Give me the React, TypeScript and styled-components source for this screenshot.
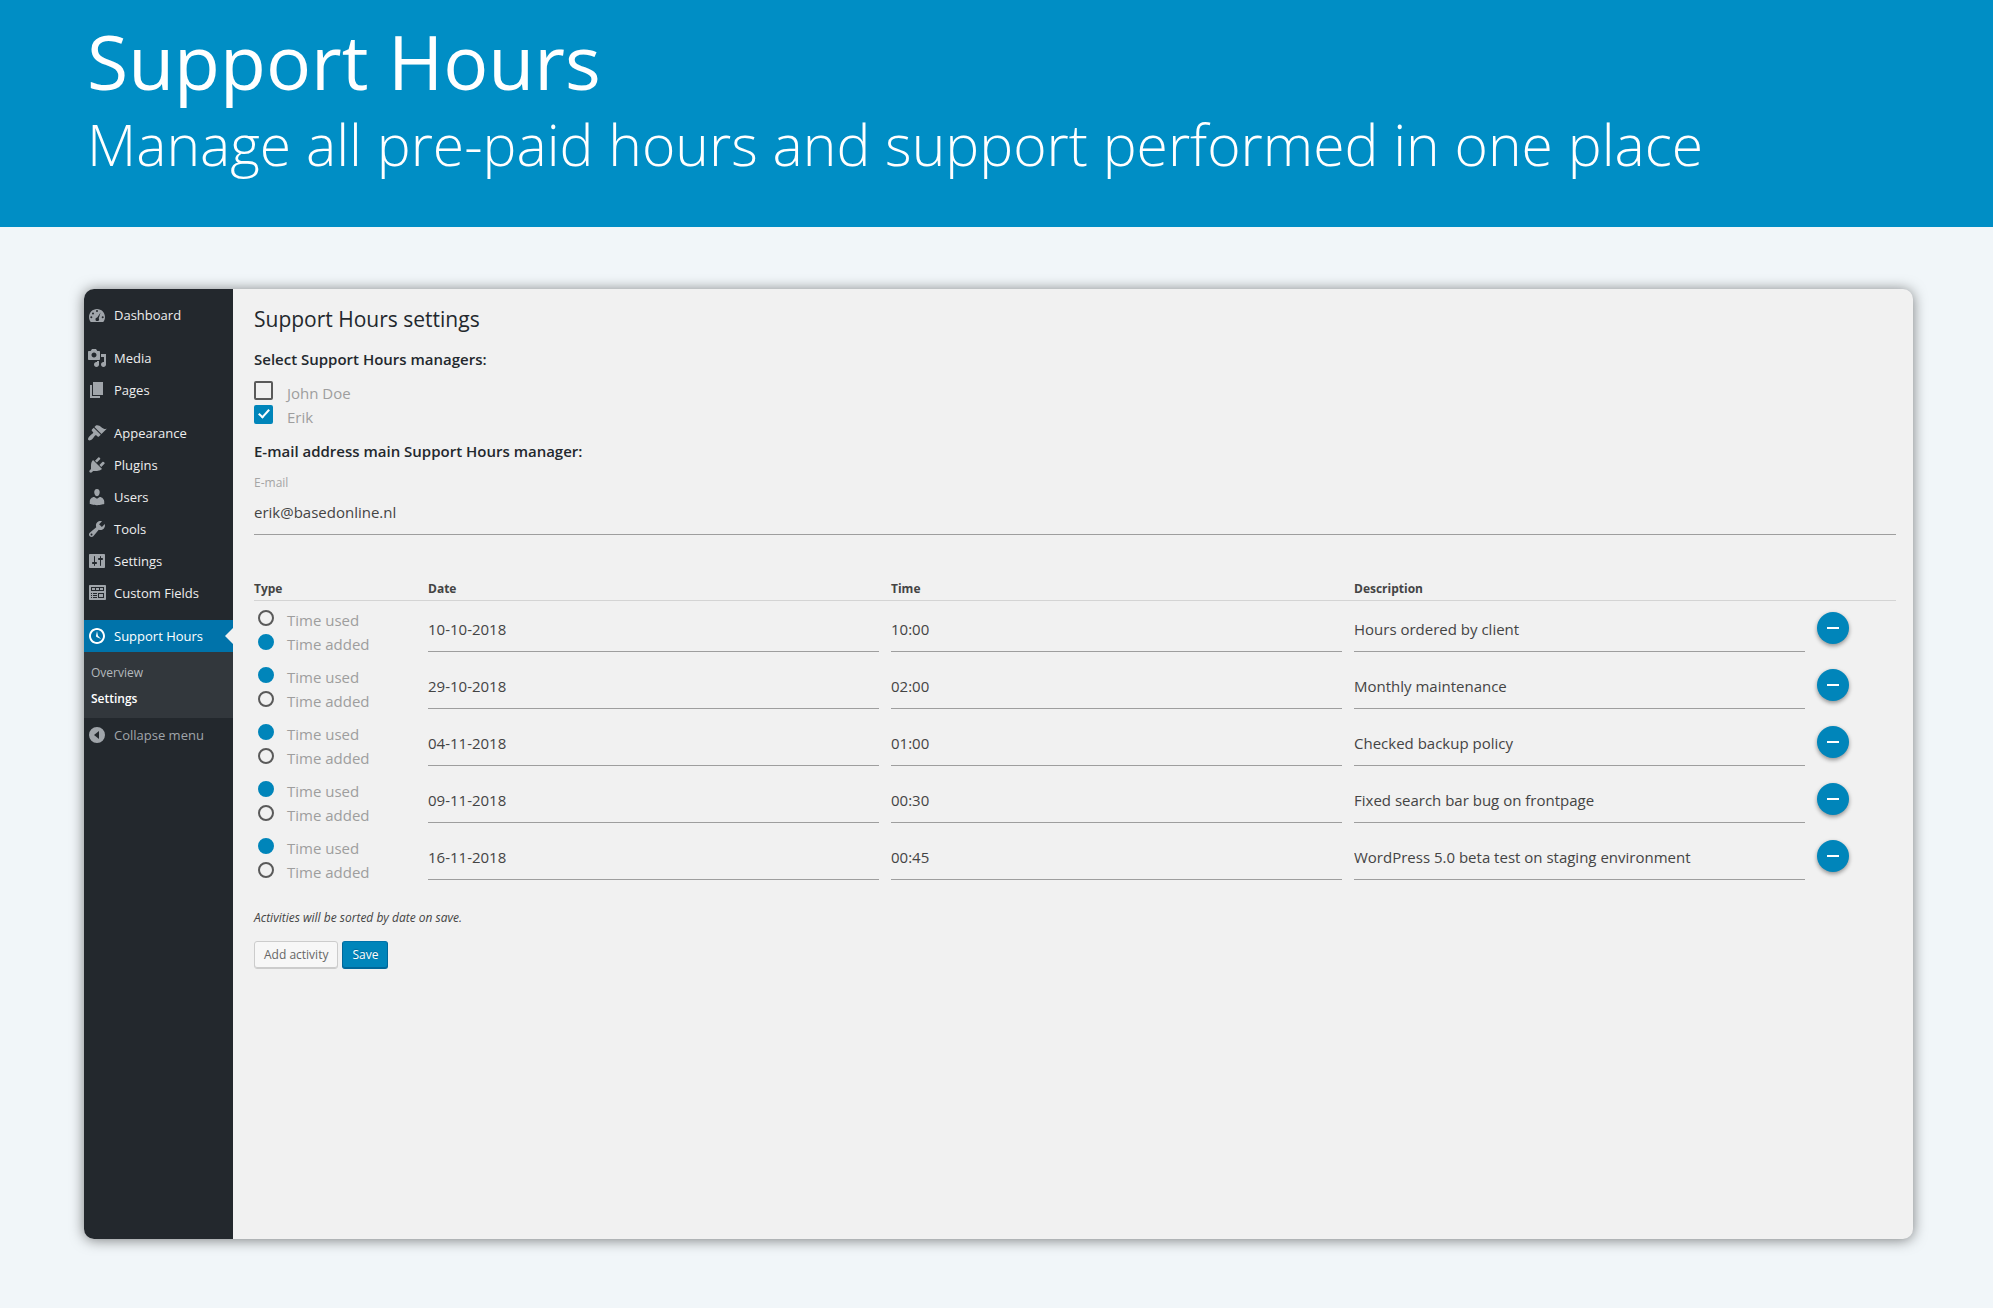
import React, { useState } from "react";
import styled, { createGlobalStyle } from "styled-components";

const GlobalStyle = createGlobalStyle`
  *, *::before, *::after { box-sizing: border-box; }
  body {
    margin: 0;
    background: #f1f6f9;
    font-family: "Open Sans", "Noto Sans", sans-serif;
    color: #444;
  }
`;

const Page = styled.div`
  min-height: 100vh;
  display: flex;
  flex-direction: column;
`;

const Banner = styled.header`
  background: #008ec5;
  color: #fff;
  padding: 13px 87px 48px;
`;

const BannerTitle = styled.h1`
  margin: 0;
  font-size: 75px;
  line-height: 97px;
  font-weight: 400;
`;

const BannerText = styled.p`
  margin: 0;
  font-size: 57px;
  line-height: 69px;
  font-weight: 300;
`;

const Stage = styled.div`
  flex: 1;
  display: flex;
  padding: 62px 80px 69px 84px;
`;

const Panel = styled.div`
  flex: 1;
  display: flex;
  border-radius: 10px;
  overflow: hidden;
  background: #f1f1f1;
  box-shadow: 0 1px 14px rgba(0, 0, 0, 0.5);
`;

const Sidebar = styled.nav`
  flex: 0 0 149px;
  background: #23282d;
  padding-top: 10px;
`;

const MenuGroup = styled.ul`
  list-style: none;
  margin: 0 0 11px;
  padding: 0;
`;

const MenuLink = styled.a<{ $active?: boolean }>`
  position: relative;
  display: flex;
  align-items: center;
  gap: 7px;
  height: 32px;
  padding-left: 3px;
  font-size: 13px;
  line-height: 32px;
  text-decoration: none;
  white-space: nowrap;
  color: ${(p) => (p.$active ? "#fff" : "#eee")};
  background: ${(p) => (p.$active ? "#0073aa" : "transparent")};

  svg { color: ${(p) => (p.$active ? "#fff" : "#a0a5aa")}; }

  &::after {
    content: "";
    display: ${(p) => (p.$active ? "block" : "none")};
    position: absolute;
    right: 0;
    top: 8px;
    border: 8px solid transparent;
    border-left-width: 0;
    border-right-color: #f1f1f1;
  }
`;

const SubMenu = styled.ul`
  list-style: none;
  margin: 0;
  padding: 8px 0 6px;
  background: #32373c;
`;

const SubLink = styled.a<{ $current?: boolean }>`
  display: block;
  padding-left: 7px;
  font-size: 12px;
  line-height: 26px;
  text-decoration: none;
  font-weight: ${(p) => (p.$current ? 600 : 400)};
  color: ${(p) => (p.$current ? "#fff" : "#b4b9be")};
`;

const CollapseButton = styled.button`
  display: flex;
  align-items: center;
  gap: 7px;
  width: 100%;
  height: 34px;
  padding: 0 0 0 3px;
  border: 0;
  background: none;
  font: 13px/32px "Open Sans", "Noto Sans", sans-serif;
  color: #a0a5aa;
  white-space: nowrap;
`;

const Icon = styled.svg`
  flex: none;
  width: 20px;
  height: 20px;
  fill: currentColor;
`;

const Content = styled.main`
  flex: 1;
  min-width: 0;
  padding: 14px 17px 24px 21px;
`;

const Heading = styled.h2`
  margin: 0;
  font-size: 21px;
  line-height: 32px;
  font-weight: 400;
  color: #23282d;
`;

const SubHeading = styled.h3`
  margin: 12px 0 8px;
  font-size: 15px;
  line-height: 24px;
  font-weight: 600;
  color: #23282d;
`;

const Choice = styled.label<{ $round?: boolean }>`
  display: flex;
  align-items: center;
  gap: 14px;
  height: 24px;
  padding-left: ${(p) => (p.$round ? "4px" : "0")};
  color: #9e9e9e;
  font-size: 15px;
  line-height: 20px;
`;

const ChoiceText = styled.span`
  padding-top: 3px;
  white-space: nowrap;
`;

const Checkbox = styled.input`
  appearance: none;
  display: grid;
  place-items: center;
  width: 19px;
  height: 19px;
  margin: 0 0 2px;
  border: 2px solid #5a5a5a;
  border-radius: 2px;

  &:checked {
    border-color: #0085ba;
    background: #0085ba;
  }

  &:checked::after {
    content: "";
    width: 6px;
    height: 11px;
    margin-bottom: 3px;
    border: solid #fff;
    border-width: 0 2px 2px 0;
    transform: rotate(42deg);
  }
`;

const Radio = styled.input`
  appearance: none;
  width: 16px;
  height: 16px;
  margin: 0 -1px 0 0;
  border: 2px solid #5a5a5a;
  border-radius: 50%;

  &:checked {
    border-color: #0085ba;
    background: #0085ba;
  }
`;

const FieldLabel = styled.label`
  display: block;
  font-size: 12px;
  line-height: 24px;
  color: #a5a5a5;
`;

const LineInput = styled.input`
  display: block;
  width: 100%;
  height: 40px;
  padding: 0 0 5px;
  border: 0;
  border-bottom: 1px solid #9e9e9e;
  border-radius: 0;
  outline: 0;
  background: transparent;
  font: 15px "Open Sans", "Noto Sans", sans-serif;
  color: #444;
`;

const ActivityTable = styled.table`
  width: 100%;
  margin-top: 42px;
  border-collapse: separate;
  border-spacing: 0;
  table-layout: fixed;
`;

const HeadCell = styled.th<{ $width?: number }>`
  width: ${(p) => (p.$width ? `${p.$width}px` : "auto")};
  height: 24px;
  padding: 0;
  border-bottom: 1px solid #d4d4d4;
  font-size: 12px;
  line-height: 20px;
  font-weight: 700;
  text-align: left;
`;

const Row = styled.tr`
  height: 57px;
`;

const Cell = styled.td<{ $choices?: boolean }>`
  padding: ${(p) => (p.$choices ? "5px 0 0" : "11px 12px 0 0")};
  vertical-align: top;
`;

const RemoveButton = styled.button`
  display: grid;
  place-items: center;
  width: 32px;
  height: 32px;
  padding: 0;
  border: 0;
  border-radius: 50%;
  background: #0085ba;
  box-shadow: 0 2px 4px rgba(0, 0, 0, 0.4);

  &::after {
    content: "";
    width: 12px;
    height: 2px;
    background: #fff;
  }
`;

const Note = styled.p`
  margin: 20px 0 11px;
  font-size: 12px;
  line-height: 24px;
  font-style: italic;
`;

const Actions = styled.div`
  display: flex;
  gap: 4px;
`;

const Button = styled.button<{ $primary?: boolean }>`
  height: 28px;
  padding: 0 9px;
  border: 1px solid;
  border-color: ${(p) => (p.$primary ? "#0073aa #006799 #006799" : "#ccc")};
  border-radius: 3px;
  background: ${(p) => (p.$primary ? "#0085ba" : "#f7f7f7")};
  box-shadow: ${(p) => (p.$primary ? "inset 0 -1px 0 #006799" : "inset 0 -1px 0 #ccc")};
  font: 12px/24px "Open Sans", "Noto Sans", sans-serif;
  text-shadow: ${(p) => (p.$primary ? "0 -1px 1px #006799" : "none")};
  color: ${(p) => (p.$primary ? "#fff" : "#666")};
`;

const icons = {
  dashboard: (
    <path
      fillRule="evenodd"
      d="M3.76 17h12.48c1.1-1.37 1.76-3.11 1.76-5 0-4.42-3.58-8-8-8s-8 3.58-8 8c0 1.89.66 3.63 1.76 5zM9 6a1 1 0 1 0 2 0 1 1 0 1 0-2 0zM5 8.5a1 1 0 1 0 2 0 1 1 0 1 0-2 0zM3.3 12.3a1 1 0 1 0 2 0 1 1 0 1 0-2 0zM14.7 12.3a1 1 0 1 0 2 0 1 1 0 1 0-2 0zM13.6 7.4l-1.9 5.9c.3.3.4.7.4 1.1 0 1-.8 1.7-1.8 1.7s-1.8-.8-1.8-1.7c0-1 .8-1.8 1.7-1.8z"
    />
  ),
  media: (
    <path d="M13 11V4c0-.55-.45-1-1-1h-1.67L9 1H5L3.67 3H2c-.55 0-1 .45-1 1v7c0 .55.45 1 1 1h10c.55 0 1-.45 1-1zM7 4.5c1.38 0 2.5 1.12 2.5 2.5S8.38 9.5 7 9.5 4.5 8.38 4.5 7 5.62 4.5 7 4.5zM14 6h5v10.5c0 1.38-1.12 2.5-2.5 2.5S14 17.88 14 16.5s1.12-2.5 2.5-2.5c.17 0 .34.02.5.05V9h-3V6zm-4 8.05V13h2v3.5c0 1.38-1.12 2.5-2.5 2.5S7 17.88 7 16.5 8.12 14 9.5 14c.17 0 .34.02.5.05z" fillRule="evenodd" />
  ),
  pages: <path d="M6 15V2h10v13H6zm-1 1h8v2H3V5h2v11z" />,
  appearance: (
    <path d="M14.48 11.06L7.41 3.99l1.5-1.5c.5-.56 2.3-.47 3.51.32 1.21.8 1.43 1.28 2.91 2.1 1.18.64 2.45 1.26 4.45.85zm-.71.71L6.7 4.7 4.93 6.47c-.39.39-.39 1.02 0 1.41l1.06 1.06c.39.39.39 1.03 0 1.42-.6.6-1.43 1.11-2.21 1.69-.35.26-.7.53-1.01.84C1.43 14.23.4 16.08 1.4 17.07c.99 1 2.84-.03 4.18-1.36.31-.31.58-.66.85-1.02.57-.78 1.08-1.61 1.69-2.21.39-.39 1.02-.39 1.41 0l1.06 1.06c.39.39 1.02.39 1.41 0z" />
  ),
  plugins: (
    <path d="M13.11 4.36L9.87 7.6 8 5.73l3.24-3.24c.35-.34 1.05-.2 1.56.32.52.51.66 1.21.31 1.55zm-8 1.77l.91-1.12 9.01 9.01-1.19.84c-.71.71-2.63 1.16-3.82 1.16H6.14L4.9 17.26c-.59.59-1.54.59-2.12 0-.59-.58-.59-1.53 0-2.12l1.24-1.24v-3.88c0-1.13.4-3.19 1.09-3.89zm7.26 3.97l3.24-3.24c.34-.35 1.04-.21 1.55.31.52.51.66 1.21.31 1.55l-3.24 3.25z" />
  ),
  users: (
    <path d="M10 9.25c-2.27 0-2.73-3.44-2.73-3.44C7 4.02 7.82 2 9.97 2c2.16 0 2.98 2.02 2.71 3.81 0 0-.41 3.44-2.68 3.44zm0 2.57L12.72 10c2.39 0 4.52 2.33 4.52 4.53v2.49s-3.65 1.13-7.24 1.13c-3.65 0-7.24-1.13-7.24-1.13v-2.49c0-2.25 1.94-4.48 4.47-4.48z" />
  ),
  tools: (
    <path fillRule="evenodd" d="M16.68 9.77c-1.34 1.34-3.3 1.67-4.95.99l-5.41 6.52c-.99.99-2.59.99-3.58 0s-.99-2.59 0-3.57l6.52-5.42c-.68-1.65-.35-3.61.99-4.95 1.28-1.28 3.12-1.62 4.72-1.06l-2.89 2.89 2.82 2.82 2.86-2.87c.53 1.58.18 3.39-1.08 4.65zM3.81 16.21c.4.39 1.04.39 1.43 0 .4-.4.4-1.04 0-1.43-.39-.4-1.03-.4-1.43 0-.39.39-.39 1.03 0 1.43z" />
  ),
  settings: (
    <path fillRule="evenodd" d="M18 16V4c0-.55-.45-1-1-1H3c-.55 0-1 .45-1 1v12c0 .55.45 1 1 1h14c.55 0 1-.45 1-1zM8 11h1c.55 0 1 .45 1 1s-.45 1-1 1H8v1.5c0 .28-.22.5-.5.5s-.5-.22-.5-.5V13H6c-.55 0-1-.45-1-1s.45-1 1-1h1V5.5c0-.28.22-.5.5-.5s.5.22.5.5V11zm5-2h-1c-.55 0-1-.45-1-1s.45-1 1-1h1V5.5c0-.28.22-.5.5-.5s.5.22.5.5V7h1c.55 0 1 .45 1 1s-.45 1-1 1h-1v5.5c0 .28-.22.5-.5.5s-.5-.22-.5-.5V9z" />
  ),
  fields: (
    <path fillRule="evenodd" d="M19 16V3c0-.55-.45-1-1-1H3c-.55 0-1 .45-1 1v13c0 .55.45 1 1 1h15c.55 0 1-.45 1-1zM4 4h13v4H4zM5 5v2h3V5zM9 5v2h3V5zM13 5v2h3V5zM4 10h1v1H4zM6 10h4v1H6zM4 12h1v1H4zM6 12h4v1H6zM4 14h1v1H4zM6 14h4v1H6zM11 10h6v5h-6zM12 11v3h4v-3z" />
  ),
  clock: (
    <path fillRule="evenodd" d="M10 2c4.42 0 8 3.58 8 8s-3.58 8-8 8-8-3.58-8-8 3.58-8 8-8zm0 14c3.31 0 6-2.69 6-6s-2.69-6-6-6-6 2.69-6 6 2.69 6 6 6zm-.71-5.29c.07.05.14.1.23.15l-.02.02L14 13l-3.03-3.19L10 5l-.97 4.81h.01c0 .02-.01.05-.02.09S9 9.97 9 10c0 .28.1.52.29.71z" />
  ),
  collapse: (
    <path fillRule="evenodd" d="M10 2a8 8 0 1 0 0 16 8 8 0 1 0 0-16zM12 6v8l-5-4z" />
  ),
};

type IconName = keyof typeof icons;

function MenuIcon({ name }: { name: IconName }) {
  return (
    <Icon viewBox="0 0 20 20" aria-hidden="true">
      {icons[name]}
    </Icon>
  );
}

const menuGroups: { label: string; icon: IconName }[][] = [
  [{ label: "Dashboard", icon: "dashboard" }],
  [
    { label: "Media", icon: "media" },
    { label: "Pages", icon: "pages" },
  ],
  [
    { label: "Appearance", icon: "appearance" },
    { label: "Plugins", icon: "plugins" },
    { label: "Users", icon: "users" },
    { label: "Tools", icon: "tools" },
    { label: "Settings", icon: "settings" },
    { label: "Custom Fields", icon: "fields" },
  ],
];

type Kind = "used" | "added";

interface Activity {
  id: number;
  kind: Kind;
  date: string;
  time: string;
  description: string;
}

const initialActivities: Activity[] = [
  { id: 1, kind: "added", date: "10-10-2018", time: "10:00", description: "Hours ordered by client" },
  { id: 2, kind: "used", date: "29-10-2018", time: "02:00", description: "Monthly maintenance" },
  { id: 3, kind: "used", date: "04-11-2018", time: "01:00", description: "Checked backup policy" },
  { id: 4, kind: "used", date: "09-11-2018", time: "00:30", description: "Fixed search bar bug on frontpage" },
  { id: 5, kind: "used", date: "16-11-2018", time: "00:45", description: "WordPress 5.0 beta test on staging environment" },
];

function ActivityRow({ activity, onRemove }: { activity: Activity; onRemove: () => void }) {
  const group = `type-${activity.id}`;
  return (
    <Row>
      <Cell $choices>
        <Choice $round>
          <Radio type="radio" name={group} defaultChecked={activity.kind === "used"} />
          <ChoiceText>Time used</ChoiceText>
        </Choice>
        <Choice $round>
          <Radio type="radio" name={group} defaultChecked={activity.kind === "added"} />
          <ChoiceText>Time added</ChoiceText>
        </Choice>
      </Cell>
      <Cell>
        <LineInput aria-label="Date" defaultValue={activity.date} />
      </Cell>
      <Cell>
        <LineInput aria-label="Time" defaultValue={activity.time} />
      </Cell>
      <Cell>
        <LineInput aria-label="Description" defaultValue={activity.description} />
      </Cell>
      <Cell>
        <RemoveButton type="button" aria-label="Remove activity" onClick={onRemove} />
      </Cell>
    </Row>
  );
}

export default function App() {
  const [activities, setActivities] = useState(initialActivities);

  const addActivity = () =>
    setActivities((list) => [
      ...list,
      { id: Date.now(), kind: "used", date: "", time: "", description: "" },
    ]);

  return (
    <Page>
      <GlobalStyle />
      <Banner>
        <BannerTitle>Support Hours</BannerTitle>
        <BannerText>Manage all pre-paid hours and support performed in one place</BannerText>
      </Banner>
      <Stage>
        <Panel>
          <Sidebar aria-label="Main menu">
            {menuGroups.map((group, index) => (
              <MenuGroup key={index}>
                {group.map((item) => (
                  <li key={item.label}>
                    <MenuLink href="#">
                      <MenuIcon name={item.icon} />
                      {item.label}
                    </MenuLink>
                  </li>
                ))}
              </MenuGroup>
            ))}
            <MenuLink href="#" $active>
              <MenuIcon name="clock" />
              Support Hours
            </MenuLink>
            <SubMenu>
              <li>
                <SubLink href="#">Overview</SubLink>
              </li>
              <li>
                <SubLink href="#" $current aria-current="page">
                  Settings
                </SubLink>
              </li>
            </SubMenu>
            <CollapseButton type="button">
              <MenuIcon name="collapse" />
              Collapse menu
            </CollapseButton>
          </Sidebar>
          <Content>
            <Heading>Support Hours settings</Heading>
            <SubHeading>Select Support Hours managers:</SubHeading>
            <Choice>
              <Checkbox type="checkbox" />
              <ChoiceText>John Doe</ChoiceText>
            </Choice>
            <Choice>
              <Checkbox type="checkbox" defaultChecked />
              <ChoiceText>Erik</ChoiceText>
            </Choice>
            <SubHeading>E-mail address main Support Hours manager:</SubHeading>
            <FieldLabel htmlFor="email">E-mail</FieldLabel>
            <LineInput id="email" type="email" defaultValue="erik@basedonline.nl" />
            <ActivityTable>
              <thead>
                <tr>
                  <HeadCell $width={174}>Type</HeadCell>
                  <HeadCell>Date</HeadCell>
                  <HeadCell>Time</HeadCell>
                  <HeadCell>Description</HeadCell>
                  <HeadCell $width={79} aria-label="Remove" />
                </tr>
              </thead>
              <tbody>
                {activities.map((activity) => (
                  <ActivityRow
                    key={activity.id}
                    activity={activity}
                    onRemove={() => setActivities((list) => list.filter((a) => a.id !== activity.id))}
                  />
                ))}
              </tbody>
            </ActivityTable>
            <Note>Activities will be sorted by date on save.</Note>
            <Actions>
              <Button type="button" onClick={addActivity}>
                Add activity
              </Button>
              <Button type="button" $primary>
                Save
              </Button>
            </Actions>
          </Content>
        </Panel>
      </Stage>
    </Page>
  );
}
